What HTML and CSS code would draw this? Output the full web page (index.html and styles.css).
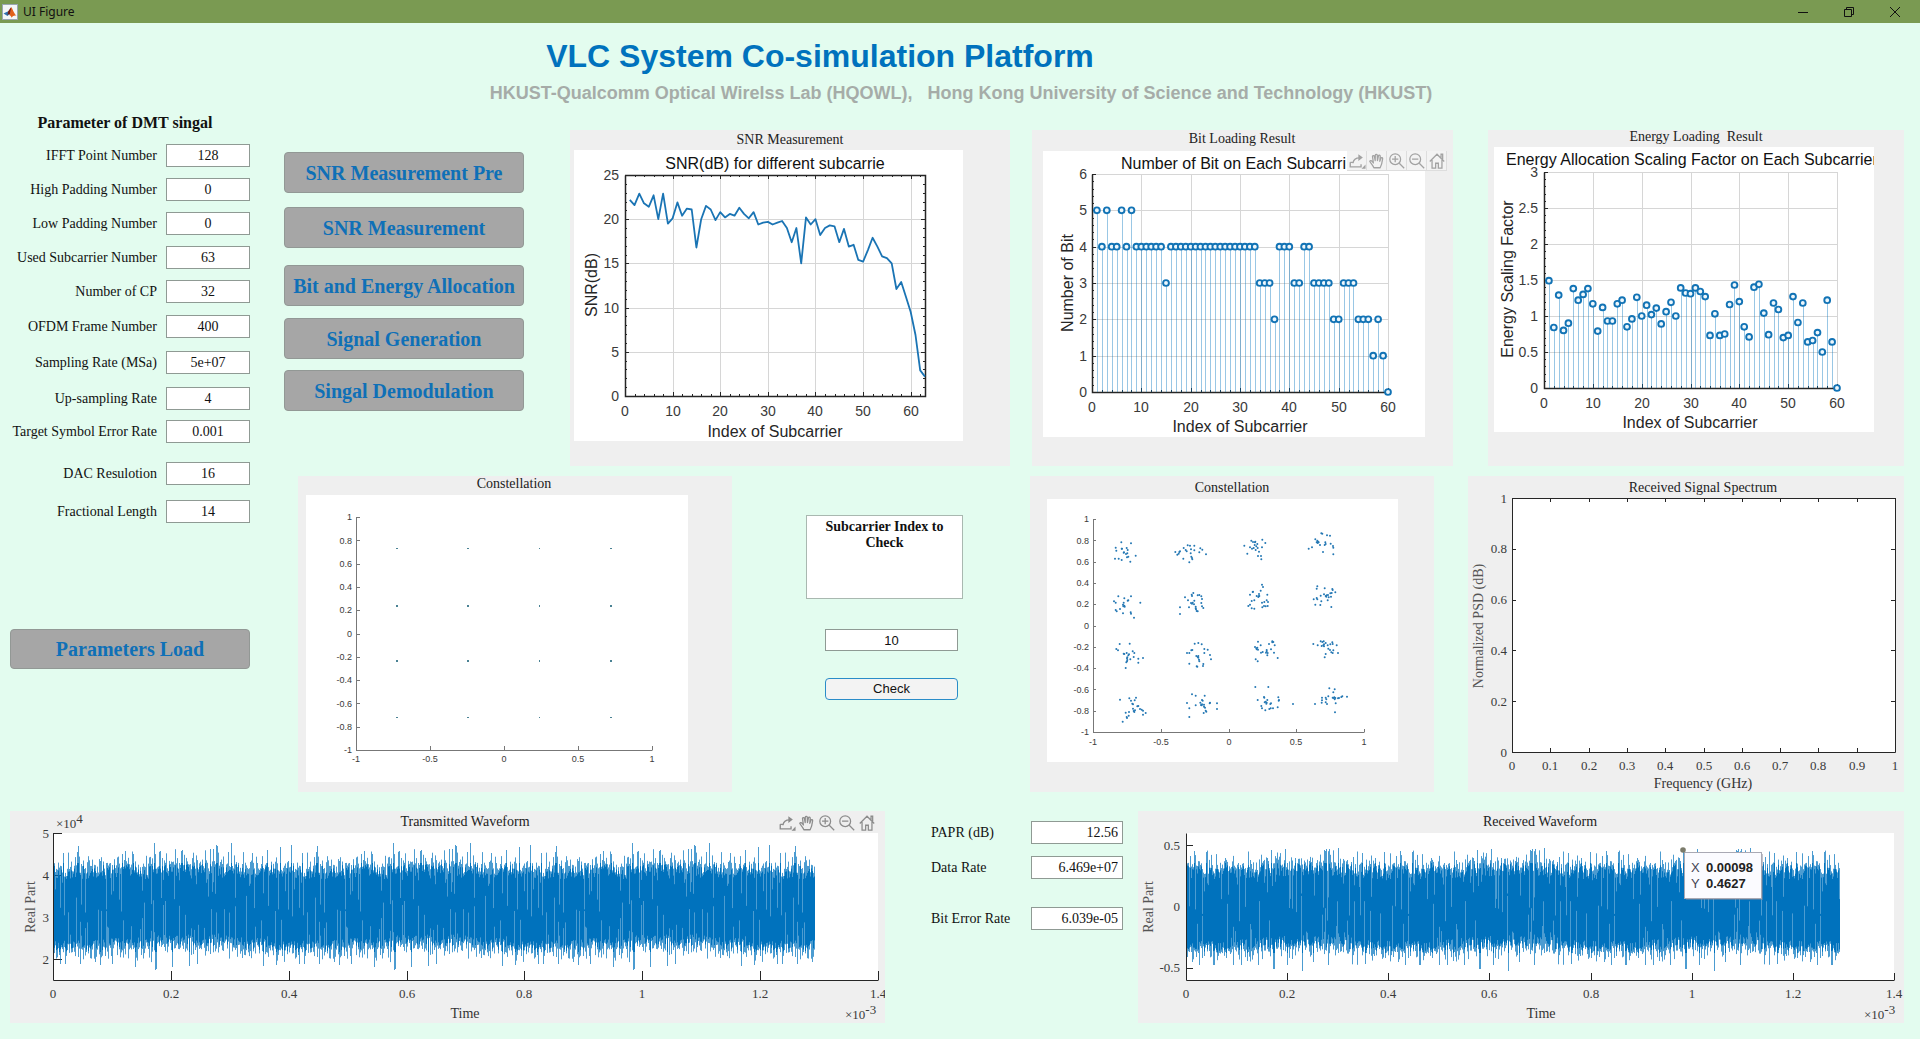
FILE: index.html
```html
<!DOCTYPE html>
<html lang="en">
<head>
<meta charset="utf-8">
<title>UI Figure</title>
<link rel="stylesheet" href="styles.css">
</head>
<body>
<svg class="sprite" aria-hidden="true">
  <symbol id="i-export" viewBox="0 0 20 20"><path d="M2.5 11.5v5h12v-3M2.5 11.500h3M5.500 12.500c.5-4 3-6 7.500-6" fill="none" stroke="currentColor" stroke-width="1.500"/><path d="M11.500 2.500l5 3.700-5 3.800zM19.500 14v4.500h-4.500z" fill="currentColor"/></symbol>
  <symbol id="i-pan" viewBox="0 0 20 20"><path d="M6.500 17.500c-1-2.500-3-4.500-4.500-7 .3-1.300 1.800-1.200 2.600-.2l1.400 1.900-1-7.300c.2-1.300 1.800-1.300 2.100 0l.9 4.600.1-6c.3-1.300 1.900-1.300 2.200 0l.2 6 1.100-5.300c.4-1.200 1.900-1 2 .3l-.5 5.800 1.300-3.400c.6-1 1.900-.6 1.900.5-.5 4-1.300 7.500-2.800 10.100z" fill="none" stroke="currentColor" stroke-width="1.400" stroke-linejoin="round"/></symbol>
  <symbol id="i-zoomin" viewBox="0 0 20 20"><path d="M12.500 12.500l5.500 5.500M4.500 8h7M8 4.500v7" fill="none" stroke="currentColor" stroke-width="1.400"/><circle cx="8" cy="8" r="6" fill="none" stroke="currentColor" stroke-width="1.400"/></symbol>
  <symbol id="i-zoomout" viewBox="0 0 20 20"><path d="M12.500 12.500l5.500 5.500M4.500 8h7" fill="none" stroke="currentColor" stroke-width="1.400"/><circle cx="8" cy="8" r="6" fill="none" stroke="currentColor" stroke-width="1.400"/></symbol>
  <symbol id="i-home" viewBox="0 0 20 20"><path d="M2 10.500l8-8 8 8M4.500 9v9h4v-5.500h3v5.500h4v-9M14.500 6.500v-4h1.800v5.500" fill="none" stroke="currentColor" stroke-width="1.400"/></symbol>
</svg>

<header class="titlebar">
  <svg class="titlebar__logo" viewBox="0 0 16 16" aria-hidden="true"><rect x=".5" y=".5" width="15" height="15" fill="#f4f6f8" stroke="#9aa6b4"/><path d="M1.500 9.500l3-1.500 1.500-.5 2 2-2.500 2.500z" fill="#2f6fb0"/><path d="M6 7.500l3.200-4.500-.7 8.500-1.500-1.500-1.500 1z" fill="#7a1d14"/><path d="M9.200 3c1.300 1.500 2.500 6 5.300 8.800-2-.8-3.500 0-5 2-.2-1.700-1-2.300-2-2.500 1-2 1.300-5.500 1.700-8.300z" fill="#e2611c"/></svg>
  <span class="titlebar__name">UI Figure</span>
  <button class="winbtn" aria-label="Minimize"><svg viewBox="0 0 10 10"><path d="M0 5.500h10"/></svg></button>
  <button class="winbtn" aria-label="Restore"><svg viewBox="0 0 10 10"><path d="M.5 2.500h7v7h-7zM2.500 2.500v-2h7v7h-2"/></svg></button>
  <button class="winbtn" aria-label="Close"><svg viewBox="0 0 10 10"><path d="M0 0l10 10M10 0L0 10"/></svg></button>
</header>

<div class="heading">
  <h1 class="heading__title">VLC System Co-simulation Platform</h1>
  <p class="heading__lab">HKUST-Qualcomm Optical Wirelss Lab (HQOWL),&nbsp;&nbsp; Hong Kong University of Science and Technology (HKUST)</p>
</div>

<main>
  <div class="workspace">
    <aside class="sidebar">
      <h2 class="sidebar__title">Parameter of DMT singal</h2>
      <form class="params">
        <label for="ifft">IFFT Point Number</label><input class="field" id="ifft" value="128">
        <label for="high">High Padding Number</label><input class="field" id="high" value="0">
        <label for="low">Low Padding Number</label><input class="field" id="low" value="0">
        <label for="used">Used Subcarrier Number</label><input class="field" id="used" value="63">
        <label for="cp">Number of CP</label><input class="field" id="cp" value="32">
        <label for="ofdm">OFDM Frame Number</label><input class="field" id="ofdm" value="400">
        <label for="rate">Sampling Rate (MSa)</label><input class="field" id="rate" value="5e+07">
        <label for="up">Up-sampling Rate</label><input class="field" id="up" value="4">
        <label for="ser">Target Symbol Error Rate</label><input class="field" id="ser" value="0.001">
        <label for="dac">DAC Resulotion</label><input class="field" id="dac" value="16">
        <label for="frac">Fractional Length</label><input class="field" id="frac" value="14">
      </form>
      <button class="action action--load">Parameters Load</button>
    </aside>

    <div class="plots">
      <section class="row row--top">
        <div class="actions">
          <button class="action">SNR Measurement Pre</button>
          <button class="action">SNR Measurement</button>
          <button class="action">Bit and Energy Allocation</button>
          <button class="action">Signal Generation</button>
          <button class="action">Singal Demodulation</button>
        </div>
        <figure class="panel"><svg id="snr" viewBox="0 0 440 336"></svg></figure>
        <figure class="panel"><svg id="bits" viewBox="0 0 421 336"></svg>
          <div class="tools tools--image">
            <button aria-label="Export"><svg><use href="#i-export"/></svg></button>
            <button aria-label="Pan"><svg><use href="#i-pan"/></svg></button>
            <button aria-label="Zoom in"><svg><use href="#i-zoomin"/></svg></button>
            <button aria-label="Zoom out"><svg><use href="#i-zoomout"/></svg></button>
            <button aria-label="Restore view"><svg><use href="#i-home"/></svg></button>
          </div>
        </figure>
        <figure class="panel"><svg id="energy" viewBox="0 0 416 336"></svg></figure>
      </section>

      <section class="row row--middle">
        <figure class="panel"><svg id="txconst" viewBox="0 0 434 316"></svg></figure>
        <div class="check">
          <textarea class="check__note" aria-label="Subcarrier note">Subcarrier Index to Check</textarea>
          <div class="check__controls">
            <input class="check__index" aria-label="Subcarrier index" value="10">
            <button class="check__button">Check</button>
          </div>
        </div>
        <figure class="panel"><svg id="rxconst" viewBox="0 0 404 316"></svg></figure>
        <figure class="panel"><svg id="spectrum" viewBox="0 0 436 316"></svg></figure>
      </section>
    </div>
  </div>

  <section class="row row--bottom">
    <figure class="panel"><svg id="txwave" viewBox="0 0 875 212"></svg>
      <div class="tools">
        <button aria-label="Export"><svg><use href="#i-export"/></svg></button>
        <button aria-label="Pan"><svg><use href="#i-pan"/></svg></button>
        <button aria-label="Zoom in"><svg><use href="#i-zoomin"/></svg></button>
        <button aria-label="Zoom out"><svg><use href="#i-zoomout"/></svg></button>
        <button aria-label="Restore view"><svg><use href="#i-home"/></svg></button>
      </div>
    </figure>
    <form class="metrics">
      <label for="papr">PAPR (dB)</label><input class="field field--right" id="papr" value="12.56">
      <label for="data">Data Rate</label><input class="field field--right" id="data" value="6.469e+07">
      <label for="ber">Bit Error Rate</label><input class="field field--right" id="ber" value="6.039e-05">
    </form>
    <figure class="panel"><svg id="rxwave" viewBox="0 0 766 212"></svg></figure>
  </section>
</main>
<script src="plots.js"></script>
</body>
</html>
```
FILE: styles.css
```css
* { box-sizing: border-box; }
body {
  margin: 0;
  background: #e3fcef;
  color: #111;
  font: 14px/20px "Liberation Serif", serif;
}
button, input, textarea { font: inherit; color: inherit; margin: 0; }
.sprite { display: none; }

.titlebar {
  display: flex;
  align-items: center;
  height: 23px;
  padding: 0 2px;
  background: #7a9a52;
}
.titlebar__logo { width: 16px; height: 16px; }
.titlebar__name { flex: 1; padding-left: 5px; font: 12px/20px "Noto Sans", sans-serif; }
.winbtn {
  width: 46px;
  height: 21px;
  padding: 0;
  border: 0;
  background: none;
  line-height: 0;
}
.winbtn svg { width: 10px; height: 10px; fill: none; stroke: #111; overflow: visible; }

.heading { padding-top: 13px; text-align: center; font-family: "Liberation Sans", sans-serif; }
.heading__title {
  margin: 0;
  padding-right: 280px;
  font-size: 32px;
  line-height: 40px;
  color: #0072bd;
}
.heading__lab { margin: 5px 0 8px; padding-left: 2px; font-size: 18px; line-height: 24px; font-weight: bold; color: #a6aca8; }

.workspace {
  display: grid;
  grid-template-columns: 250px minmax(0, 1fr);
  column-gap: 34px;
  padding-right: 16px;
}
.sidebar__title { margin: 0 0 11px; text-align: center; font-size: 16px; line-height: 20px; }
.params {
  display: grid;
  grid-template-columns: 1fr 84px;
  grid-template-rows: repeat(4, 34px) 35px repeat(2, 36px) 33px 42px 38px 23px;
  column-gap: 9px;
  text-align: right;
}
.params label { line-height: 23px; white-space: nowrap; }
.field {
  width: 100%;
  height: 23px;
  padding: 0 4px;
  border: 1px solid #8f9a94;
  background: #fff;
  text-align: center;
}
.field--right { text-align: right; }
.action {
  width: 240px;
  height: 41px;
  padding: 0;
  border: 1px solid #929895;
  border-radius: 4px;
  background: #a6a6a6;
  color: #0f70b7;
  font-size: 20px;
  font-weight: bold;
  white-space: nowrap;
}
.action--load { margin: 106px 0 0 10px; height: 40px; }

.plots { padding-top: 17px; }
.row { display: grid; align-items: start; }
.row--top { grid-template-columns: 240px 46px minmax(0, 440fr) 22px minmax(0, 421fr) 35px minmax(0, 416fr); }
.row--middle {
  grid-template-columns: minmax(0, 434fr) 74px 157px 67px minmax(0, 404fr) 34px minmax(0, 436fr);
  margin-top: 10px;
  padding-left: 14px;
}
.row--bottom {
  grid-template-columns: minmax(0, 875fr) 46px 193px 14px minmax(0, 766fr);
  margin-top: 19px;
  padding: 0 16px 15px 10px;
}
.row > :nth-child(1) { grid-column: 1; }
.row > :nth-child(2) { grid-column: 3; }
.row > :nth-child(3) { grid-column: 5; }
.row > :nth-child(4) { grid-column: 7; }

.actions { display: grid; grid-template-rows: 55px 58px 53px 52px 41px; padding-top: 22px; }

.panel { position: relative; margin: 0; background: #efefef; }
.panel > svg { display: block; width: 100%; height: auto; }

.tools { position: absolute; top: 2px; right: 8px; display: flex; color: #8c8c8c; }
.tools button { width: 20px; height: 20px; padding: 1px; border: 0; background: none; line-height: 0; }
.tools svg { width: 18px; height: 18px; }
.tools--image { top: 21px; right: 6px; background: #f3f3f3; color: #a2a2a2; }
.tools--image button { border-right: 1px solid #ddd; border-bottom: 1px solid #ddd; }

.check {
  padding-top: 39px;
  font-family: "Liberation Sans", sans-serif;
  font-size: 13px;
}
.check__note {
  display: block;
  width: 100%;
  height: 84px;
  padding: 3px 4px;
  border: 1px solid #a9b8b0;
  background: #fff;
  resize: none;
  overflow: hidden;
  text-align: center;
  font: bold 14px/16px "Liberation Serif", serif;
}
.check__controls { display: grid; gap: 27px; padding: 30px 5px 0 19px; }
.check__index { width: 100%; height: 22px; padding: 0; border: 1px solid #8f9a94; background: #fff; text-align: center; }
.check__button {
  height: 22px;
  padding: 0;
  border: 1px solid #2a8cc8;
  border-radius: 4px;
  background: #f3f3f3;
}

.metrics { display: grid; grid-template-columns: 1fr 92px; grid-template-rows: 35px 51px 23px; padding: 10px 1px 0 0; }
.metrics label { line-height: 23px; }

/* plot parts */
svg text { white-space: pre; }
.sans { font-family: "Liberation Sans", sans-serif; }
.serif { font-family: "Liberation Serif", serif; }
.caption { font: 14px "Liberation Serif", serif; fill: #222; }
.grid { stroke: #d6d6d6; fill: none; }
.axis { stroke: #262626; fill: none; }
.axis--bold { stroke-width: 1.500; }
.axis--soft { stroke: #777; }
.line { stroke: #1a74b4; stroke-width: 1.800; fill: none; stroke-linejoin: round; }
.stem { stroke: #0072bd; stroke-opacity: .4; fill: none; }
.marker { stroke: #1273b5; stroke-width: 1.900; fill: #eef7fc; }
.wave { stroke: #0072bd; fill: none; }
.wave--faint { stroke-opacity: .7; }
```
FILE: plots.js
```js
const SANS = 'sans', SERIF = 'serif';

function text(x, y, s, size, family, anchor = 'middle', color = '#262626', extra = '') {
  return `<text x="${x}" y="${y}" class="${family}" font-size="${size}" text-anchor="${anchor}" fill="${color}" ${extra}>${s}</text>`;
}
function sideText(x, y, s, size, family, color) {
  return text(x, y, s, size, family, 'middle', color, `transform="rotate(-90 ${x} ${y})"`);
}
function put(id, markup) { document.getElementById(id).innerHTML = markup; }
function range(from, to, step) {
  const n = Math.round((to - from) / step);
  return Array.from({ length: n + 1 }, (_, i) => +(from + i * step).toFixed(4));
}

// Axes described by pixel box [left, top, right, bottom] and data limits.
function makeAxes(o) {
  const [l, t, r, b] = o.box;
  const X = v => l + (v - o.x[0]) / (o.x[1] - o.x[0]) * (r - l);
  const Y = v => b - (v - o.y[0]) / (o.y[1] - o.y[0]) * (b - t);
  const xs = range(o.x[0], o.x[1], o.xs).filter(v => v <= o.x[1]);
  const ys = o.yt || range(o.y[0], o.y[1], o.ys);
  const snap = v => Math.round(v) + .5;
  let m = '';
  if (o.sheet) m += `<rect x="${o.sheet[0]}" y="${o.sheet[1]}" width="${o.sheet[2] - o.sheet[0]}" height="${o.sheet[3] - o.sheet[1]}" fill="#fff"/>`;
  else m += `<rect x="${l}" y="${t}" width="${r - l}" height="${b - t}" fill="#fff"/>`;
  if (o.grid) {
    m += `<path class="grid" d="${xs.map(v => `M${snap(X(v))} ${t}V${b}`).join('')}${ys.map(v => `M${l} ${snap(Y(v))}H${r}`).join('')}"/>`;
  }
  const n = o.tick || 4;
  let d = '';
  xs.forEach(v => { d += `M${snap(X(v))} ${b}v${-n}`; if (o.boxed) d += `M${snap(X(v))} ${t}v${n}`; });
  ys.forEach(v => { d += `M${l} ${snap(Y(v))}h${n}`; if (o.boxed) d += `M${r} ${snap(Y(v))}h${-n}`; });
  if (o.minor) {
    range(o.x[0], o.x[1], o.minor[0]).forEach(v => { if (v <= o.x[1]) { d += `M${snap(X(v))} ${b}v-2`; if (o.boxed) d += `M${snap(X(v))} ${t}v2`; } });
    range(o.y[0], o.y[1], o.minor[1]).forEach(v => { d += `M${l} ${snap(Y(v))}h2`; if (o.boxed) d += `M${r} ${snap(Y(v))}h-2`; });
  }
  m += `<path class="axis ${o.soft ? 'axis--soft' : ''}" d="${d}"/>`;
  m += `<path class="axis ${o.bold ? 'axis--bold' : ''} ${o.soft ? 'axis--soft' : ''}" d="M${l + .5} ${t + .5}V${b + .5}H${r + .5}${o.boxed ? `V${t + .5}H${l}` : ''}"/>`;
  xs.forEach(v => { m += text(Math.round(X(v)), o.xtick, v, o.size, o.family, 'middle', '#3a3a3a'); });
  ys.forEach(v => { m += text(o.ytick, Math.round(Y(v) + o.size * .36), v, o.size, o.family, 'end', '#3a3a3a'); });
  return { X, Y, m };
}
function caption(x, y, s) { return `<text x="${x}" y="${y}" class="caption" text-anchor="middle">${s}</text>`; }

// SNR per subcarrier
{
  const data = [22.2, 21.6, 22.9, 21.8, 21.4, 22.7, 20, 22.9, 19.5, 20.1, 21.9, 20.4, 21.2, 21.1, 16.8, 20, 21.5, 21.1, 19.9, 20.8, 20.2, 20.6, 20.4, 21.3, 20.6, 20.1, 20.8, 19.4, 19.6, 19.7, 19.4, 19.6, 19.8, 19, 17.4, 19, 15, 20.2, 19.4, 20, 18.2, 19, 19.3, 19.2, 17.4, 18.9, 16.9, 17.1, 15.4, 15.2, 16.5, 17.9, 16.9, 15.8, 15.6, 15, 12.1, 12.9, 11.2, 9.5, 6.9, 2.9, 2.2];
  const a = makeAxes({ box: [55, 45, 355, 266], sheet: [4, 20, 393, 311], x: [0, 63], y: [0, 25], xs: 10, ys: 5, minor: [2, 1], grid: true, boxed: true, bold: true, xtick: 286, ytick: 49, size: 14, family: SANS });
  put('snr', a.m + `<path class="line" d="M${data.map((v, i) => a.X(i + 1).toFixed(1) + ' ' + a.Y(v).toFixed(1)).join('L')}"/>`
    + caption(220, 14, 'SNR Measurement') + text(205, 39, 'SNR(dB) for different subcarrie', 16, SANS, 'middle', '#111')
    + text(205, 307, 'Index of Subcarrier', 16, SANS) + sideText(27, 155, 'SNR(dB)', 16, SANS));
}

function stems(a, data) {
  return `<path class="stem" d="${data.map((v, i) => `M${Math.round(a.X(i + 1)) + .5} ${a.Y(0)}V${a.Y(v).toFixed(1)}`).join('')}"/>`
    + data.map((v, i) => `<circle class="marker" cx="${a.X(i + 1).toFixed(1)}" cy="${a.Y(v).toFixed(1)}" r="2.900"/>`).join('');
}

// Bit loading
{
  const data = [...'545445454444443' + '4'.repeat(18) + '3332444334433332233322212' + '10'].map(Number);
  const a = makeAxes({ box: [60, 44, 356, 262], sheet: [11, 21, 393, 307], x: [0, 60], y: [0, 6], xs: 10, ys: 1, minor: [2, .2], grid: true, bold: true, xtick: 282, ytick: 55, size: 14, family: SANS });
  put('bits', a.m + stems(a, data) + caption(210, 13, 'Bit Loading Result')
    + text(89, 39, 'Number of Bit on Each Subcarri', 16, SANS, 'start', '#111')
    + text(208, 302, 'Index of Subcarrier', 16, SANS) + sideText(41, 153, 'Number of Bit', 16, SANS));
}

// Energy loading
{
  const data = [1.49, .84, 1.29, .8, .9, 1.38, 1.22, 1.3, 1.38, 1.17, .79, 1.12, .93, .93, 1.17, 1.22, .85, .96, 1.26, 1, 1.15, 1.02, 1.11, .89, 1.06, 1.19, 1, 1.39, 1.32, 1.31, 1.39, 1.34, 1.27, .73, 1.03, .73, .75, 1.16, 1.43, 1.2, .85, .71, 1.4, 1.44, 1.04, .74, 1.18, 1.09, .7, .73, 1.27, .91, 1.18, .64, .66, .77, .5, 1.22, .64, 0];
  const a = makeAxes({ box: [56, 42, 349, 258], sheet: [6, 17, 386, 302], x: [0, 60], y: [0, 3], xs: 10, ys: .5, minor: [2, .1], grid: true, bold: true, xtick: 278, ytick: 50, size: 14, family: SANS });
  put('energy', a.m + stems(a, data) + caption(208, 11, 'Energy Loading  Result')
    + '<clipPath id="sheet"><path d="M6 17H386V302H6z"/></clipPath>'
    + text(18, 35, 'Energy Allocation Scaling Factor on Each Subcarrier', 16, SANS, 'start', '#111', 'clip-path="url(#sheet)"')
    + text(202, 298, 'Index of Subcarrier', 16, SANS) + sideText(25, 149, 'Energy Scaling Factor', 16, SANS));
}

// Transmitted constellation
{
  const a = makeAxes({ box: [58, 41, 354, 274], sheet: [8, 19, 390, 306], x: [-1, 1], y: [-1, 1], xs: .5, ys: .2, soft: true, xtick: 286, ytick: 54, size: 9, family: SANS });
  const levels = [-.725, -.24, .24, .725];
  let dots = '';
  levels.forEach(x => levels.forEach(y => {
    const h = Math.abs(y) < .5 ? 2 : 1;
    dots += `<rect x="${Math.round(a.X(x)) - 1}" y="${Math.round(a.Y(y)) - 1}" width="${x === .24 ? 1 : 2}" height="${h}" fill="#4a8294"/>`;
  }));
  put('txconst', a.m + dots + caption(216, 12, 'Constellation'));
}

// Received constellation: symbols in thirds of a pixel, one string per cluster
{
  const clusters = [
    '304,217 333,220 287,233 289,242 306,236 320,234 323,240 311,248 318,252 305,236 325,260 285,266 296,266 305,270 347,257 331,275 321,262 322,250 312,247',
    '466,246 472,254 478,246 490,266 491,234 497,240 503,226 510,227 500,244 513,238 514,260 517,268 508,277 523,227 523,241 541,235 547,239 538,247 558,253 476,251 512,250 480,244 516,264',
    '673,227 690,232 682,251 694,212 699,216 705,217 704,225 709,229 713,234 707,240 717,245 714,258 723,258 724,268 726,232 727,209 736,219 701,234 712,222 696,236 706,215',
    '866,236 876,232 886,208 890,217 894,215 893,219 892,212 904,190 907,191 921,196 930,197 916,217 917,222 914,225 932,221 939,228 940,233 909,246 940,253 900,225 896,217',
    '282,394 287,398 295,379 313,385 311,398 309,404 313,407 314,410 325,391 333,379 287,420 290,424 309,430 300,417 332,427 333,431 361,398 342,443 323,392 310,409',
    '480,432 480,412 495,382 504,391 507,412 515,374 520,369 513,399 518,398 522,403 516,401 527,410 527,415 533,376 544,379 546,387 544,399 546,409 550,414 530,423 533,424 538,375 523,392 528,418 516,378',
    '726,344 729,351 698,366 690,374 722,362 718,378 715,381 710,378 717,372 703,391 695,393 742,374 685,408 690,404 703,416 726,398 733,396 740,391 744,396 743,408 727,412 732,408 737,409 695,415 716,379 699,365',
    '892,349 890,356 914,355 937,357 935,369 946,367 912,373 917,378 924,375 926,382 890,384 892,388 881,388 904,394 919,380 923,391 933,380 886,404 901,405 934,411 931,370 902,377 920,376 938,360',
    '299,522 329,521 289,537 294,541 313,552 320,549 325,556 338,544 343,549 341,561 322,570 331,568 321,565 321,574 319,577 355,566 369,564 355,578 317,594 311,551 327,553 322,562',
    '524,521 535,519 545,523 501,549 508,549 514,541 529,558 535,558 533,561 537,569 538,574 553,549 553,537 563,539 570,555 573,568 508,581 530,589 532,590 549,588 550,582 535,563 517,540',
    '714,515 747,522 757,517 760,516 764,526 705,531 709,535 714,539 722,526 753,538 740,540 728,546 738,548 743,549 762,548 707,568 713,574 773,564 742,556 710,538 712,533 740,544 757,514 723,548',
    '880,522 902,514 911,514 917,519 910,526 905,528 912,523 923,526 931,523 937,517 938,522 950,526 930,540 934,547 938,549 954,549 917,552 914,562 893,526 940,541 925,536 907,516 912,529',
    '300,689 328,685 348,683 344,691 339,703 333,692 352,709 339,716 341,723 343,726 327,726 317,728 360,717 369,722 377,729 369,734 326,737 321,744 308,755 320,741 337,701 345,721 355,708 365,719',
    '516,673 501,699 508,715 527,706 546,690 548,692 541,698 552,704 545,706 552,710 570,698 591,700 591,717 557,722 551,729 508,741 527,677 554,677 546,703 559,725 543,705 569,700 555,713',
    '706,651 745,651 713,690 732,681 742,690 737,695 740,698 724,708 726,715 751,702 752,715 759,715 773,712 776,692 775,682 819,702 736,721 748,717 733,683 739,701 734,697 753,700 777,690',
    '928,655 944,658 940,667 925,679 906,683 906,691 917,683 919,688 943,682 944,688 946,684 954,685 964,681 981,680 905,698 921,702 885,702 947,700 945,727 941,684 967,679 917,697 957,684 938,683'
  ];
  const a = makeAxes({ box: [63, 43, 334, 256], sheet: [17, 23, 368, 286], x: [-1, 1], y: [-1, 1], xs: .5, ys: .2, soft: true, tick: 3, xtick: 269, ytick: 59, size: 9, family: SANS });
  const dots = clusters.join(' ').split(' ').map(p => {
    const [x, y] = p.split(',').map(Number);
    return `<circle cx="${(x / 3 - 10).toFixed(1)}" cy="${(y / 3 - 6).toFixed(1)}" r="1"/>`;
  }).join('');
  put('rxconst', a.m + `<g fill="#2478b4">${dots}</g>` + caption(202, 16, 'Constellation'));
}

// Spectrum (empty)
{
  const a = makeAxes({ box: [44, 22, 427, 276], x: [0, 1], y: [0, 1], xs: .1, ys: .2, boxed: true, xtick: 294, ytick: 39, size: 13, family: SERIF });
  put('spectrum', a.m + caption(235, 16, 'Received Signal Spectrum') + text(235, 312, 'Frequency (GHz)', 14, SERIF, 'middle', '#333')
    + sideText(15, 150, 'Normalized PSD (dB)', 14, SERIF, '#555'));
}

// Waveforms: one pixel column at a time, the frame repeats every `period` columns
function wave(left, right, period, top, bottom, peaks, dips, seed) {
  let s = seed;
  const rnd = () => (s = (s * 16807) % 2147483647) / 2147483647;
  const frame = Array.from({ length: period }, (_, i) => {
    const swell = Math.sin(i / period * 6.283 - 2) * 3;
    const hi = top - swell / 2 + (rnd() - .5) * 14, lo = bottom + 1 - swell + (rnd() - .5) * 12;
    return {
      hi: hi + (rnd() < .2 ? rnd() * 45 : 0), lo: lo - (rnd() < .2 ? rnd() * 45 : 0),
      outHi: Math.max(top - 22, hi - 2 + Math.log(rnd()) * 5), outLo: Math.min(bottom + 22, lo + 2 - Math.log(rnd()) * 5)
    };
  });
  peaks.forEach(([x, y]) => { const f = frame[x % period]; f.outHi = y; f.hi = Math.min(f.hi, top - 8); });
  dips.forEach(([x, y]) => { const f = frame[x % period]; f.outLo = y; f.lo = Math.max(f.lo, bottom + 10); });
  let faint = '', solid = '';
  for (let x = left; x < right; x++) {
    const f = frame[(x - left) % period];
    faint += `M${x + .5} ${f.outHi.toFixed(1)}V${f.outLo.toFixed(1)}`;
    solid += `M${x + .5} ${f.hi.toFixed(1)}V${f.lo.toFixed(1)}`;
  }
  return `<path class="wave wave--faint" d="${faint}"/><path class="wave" d="${solid}"/>`;
}
const exponent = (x, y, p) => text(x, y, `×10<tspan dy="-5">${p}</tspan>`, 13, SERIF, 'start', '#3a3a3a');
{
  const a = makeAxes({ box: [43, 22, 868, 169], x: [0, 1.4], y: [1.5, 5], xs: .2, yt: [2, 3, 4, 5], tick: 9, xtick: 187, ytick: 39, size: 13, family: SERIF });
  put('txwave', a.m + wave(44, 805, 239, 60, 131,
    [[9, 42], [24, 35], [68, 43], [79, 43], [100, 32], [128, 39], [162, 34], [177, 32], [213, 39], [226, 36], [237, 34], [23, 41], [163, 35], [127, 40]],
    [[46, 154], [81, 156], [101, 159], [102, 158], [118, 156], [135, 155], [209, 155], [222, 154], [5, 144]], 4711)
    + caption(455, 15, 'Transmitted Waveform') + text(455, 207, 'Time', 14, SERIF, 'middle', '#333')
    + sideText(25, 96, 'Real Part', 14, SERIF, '#555') + exponent(835, 208, '-3') + exponent(46, 17, '4'));
}
{
  const a = makeAxes({ box: [48, 22, 756, 169], x: [0, 1.4], y: [-.6, .6], xs: .2, yt: [-.5, 0, .5], tick: 7, xtick: 187, ytick: 42, size: 13, family: SERIF });
  const tip = '<g><rect x="548" y="43" width="77" height="46" fill="#8a8a9a" opacity=".5"/><rect x="546.500" y="41.500" width="77" height="46" fill="#fbfbff" stroke="#a9a9b4"/>'
    + '<circle cx="545" cy="39" r="2.800" fill="#7b7b6b"/>' + text(553, 61, 'X', 13, SANS, 'start', '#445') + text(568, 61, '0.00098', 13, SANS, 'start', '#222', 'font-weight="bold"')
    + text(553, 77, 'Y', 13, SANS, 'start', '#445') + text(568, 77, '0.4627', 13, SANS, 'start', '#222', 'font-weight="bold"') + '</g>';
  put('rxwave', a.m + wave(49, 702, 206, 60, 132,
    [[7, 40], [19, 41], [38, 47], [84, 39], [108, 47], [137, 39], [138, 40], [151, 37], [175, 42], [197, 41], [188, 47]],
    [[39, 147], [60, 150], [86, 158], [87, 158], [100, 154], [115, 160], [126, 151], [178, 153], [198, 147]], 1723)
    + caption(402, 15, 'Received Waveform') + text(403, 207, 'Time', 14, SERIF, 'middle', '#333')
    + sideText(15, 96, 'Real Part', 14, SERIF, '#555') + exponent(726, 208, '-3') + tip);
}
```
